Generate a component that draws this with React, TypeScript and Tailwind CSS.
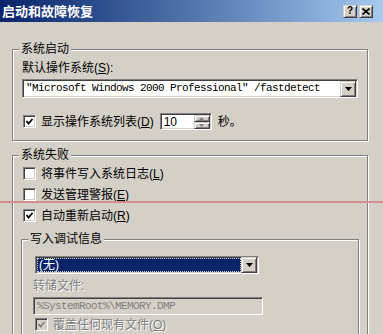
import type { ReactNode } from "react";

const font = "font-['Liberation_Sans','Noto_Sans_CJK_SC',sans-serif]";
const mono = "font-['Liberation_Mono','DejaVu_Sans_Mono',monospace]";
const sunken =
  "box-border border border-t-[#808080] border-l-[#808080] border-b-white border-r-white shadow-[inset_1px_1px_0_#404040,inset_-1px_-1px_0_#d4d0c8]";
const raised =
  "box-border border border-t-[#d4d0c8] border-l-[#d4d0c8] border-b-[#404040] border-r-[#404040] bg-[#d4d0c8] shadow-[inset_1px_1px_0_#fff,inset_-1px_-1px_0_#808080]";

function Check({ checked, disabled }: { checked?: boolean; disabled?: boolean }) {
  return (
    <span
      className={`flex h-[13px] w-[13px] shrink-0 items-center justify-center ${sunken} ${disabled ? "bg-[#d4d0c8]" : "bg-white"}`}
    >
      {checked ? (
        <svg width="9" height="9" viewBox="0 0 9 9">
          <polyline
            points="1.5,4 3.5,6.5 7.5,2"
            fill="none"
            stroke={disabled ? "#808080" : "#000"}
            strokeWidth="1.8"
          />
        </svg>
      ) : null}
    </span>
  );
}

function DropBtn() {
  return (
    <span className={`flex h-[16px] w-[16px] shrink-0 items-center justify-center ${raised}`}>
      <svg width="7" height="4" viewBox="0 0 7 4">
        <polygon points="0,0 7,0 3.5,4" fill="#000" />
      </svg>
    </span>
  );
}

function Group({ title, className, children }: { title: string; className?: string; children: ReactNode }) {
  return (
    <div
      className={`relative box-border border border-[#808080] shadow-[inset_1px_1px_0_#fff,1px_1px_0_#fff] ${className ?? ""}`}
    >
      <span className="absolute -top-[8px] left-[6px] bg-[#d4d0c8] px-[2px] text-[12px] leading-[14px] text-black">
        {title}
      </span>
      {children}
    </div>
  );
}

function Row({ checked, disabled, children }: { checked?: boolean; disabled?: boolean; children: ReactNode }) {
  return (
    <div className="flex h-[21px] items-center gap-[5px]">
      <Check checked={checked} disabled={disabled} />
      <span
        className={`text-[12px] leading-[14px] ${disabled ? "text-[#808080] [text-shadow:1px_1px_0_#fff]" : "text-black"}`}
      >
        {children}
      </span>
    </div>
  );
}

export default function App() {
  return (
    <div className={`relative h-[334px] w-[383px] overflow-hidden bg-[#d4d0c8] ${font}`}>
      {/* title bar */}
      <div className="flex h-[22px] items-center bg-gradient-to-r from-[#0a246a] to-[#a6caf0] pl-[2px] pr-[10px]">
        <span className="flex-1 text-[13px] font-bold leading-none text-white">启动和故障恢复</span>
        <div className="flex gap-[2px]">
          <span className={`flex h-[13px] w-[14px] items-center justify-center text-[10px] font-bold leading-none text-black ${raised}`}>
            ?
          </span>
          <span className={`flex h-[13px] w-[14px] items-center justify-center ${raised}`}>
            <svg width="8" height="7" viewBox="0 0 8 7">
              <path d="M0.5 0.5 L7.5 6.5 M7.5 0.5 L0.5 6.5" stroke="#000" strokeWidth="1.6" />
            </svg>
          </span>
        </div>
      </div>

      <div className="pl-[12px]">
        <Group title="系统启动" className="mt-[27px] h-[92px] w-[356px]">
          <div className="pl-[9px] pt-[11px]">
            <div className="text-[12px] leading-[14px] text-black">
              默认操作系统(<u>S</u>):
            </div>
            <div className={`mt-[4px] flex h-[19px] w-[336px] items-center bg-white pl-[3px] pr-[1px] ${sunken}`}>
              <span className={`flex-1 whitespace-pre text-[11px] tracking-[-0.6px] leading-none text-black ${mono}`}>
                "Microsoft Windows 2000 Professional" /fastdetect
              </span>
              <DropBtn />
            </div>
            <div className="mt-[15px] flex h-[17px] items-center">
              <div className="ml-[1px] flex items-center gap-[5px]">
                <Check checked />
                <span className="text-[12px] leading-[14px] text-black">
                  显示操作系统列表(<u>D</u>)
                </span>
              </div>
              <div className={`ml-[6px] flex h-[17px] w-[52px] items-center bg-white pl-[3px] pr-[1px] ${sunken}`}>
                <span className="flex-1 text-[12px] leading-none text-black">10</span>
                <div className="flex flex-col">
                  <span className={`flex h-[7px] w-[16px] items-center justify-center ${raised}`}>
                    <svg width="5" height="3" viewBox="0 0 5 3">
                      <polygon points="0,3 5,3 2.5,0" fill="#808080" />
                    </svg>
                  </span>
                  <span className={`flex h-[7px] w-[16px] items-center justify-center ${raised}`}>
                    <svg width="5" height="3" viewBox="0 0 5 3">
                      <polygon points="0,0 5,0 2.5,3" fill="#808080" />
                    </svg>
                  </span>
                </div>
              </div>
              <span className="ml-[6px] text-[12px] leading-[14px] text-black">秒。</span>
            </div>
          </div>
        </Group>

        <Group title="系统失败" className="mt-[14px] h-[200px] w-[356px]">
          <div className="pt-[7px]">
            <div className="pl-[10px]">
              <Row>
                将事件写入系统日志(<u>L</u>)
              </Row>
              <Row>
                发送管理警报(<u>E</u>)
              </Row>
              <Row checked>
                自动重新启动(<u>R</u>)
              </Row>
            </div>
            <Group title="写入调试信息" className="ml-[8px] mt-[13px] h-[120px] w-[338px]">
              <div className="pl-[11px] pt-[16px]">
                <div className={`ml-[2px] flex h-[18px] w-[224px] items-center bg-white p-[1px] ${sunken}`}>
                  <div className="flex h-full flex-1 items-center bg-[#0a246a] pl-[2px] outline-1 outline-dotted outline-offset-[-1px] outline-[#d4d0c8]">
                    <span className="text-[12px] leading-none text-white">(无)</span>
                  </div>
                  <DropBtn />
                </div>
                <div className="mt-[5px] text-[12px] leading-[14px] text-[#808080] [text-shadow:1px_1px_0_#fff]">
                  转储文件:
                </div>
                <div className={`mt-[4px] flex h-[18px] w-[230px] items-center bg-[#d4d0c8] pl-[3px] ${sunken}`}>
                  <span className={`text-[11px] tracking-[-0.6px] leading-none text-[#808080] ${mono}`}>
                    %SystemRoot%\MEMORY.DMP
                  </span>
                </div>
                <div className="ml-[2px] -mt-[1px]">
                  <Row checked disabled>
                    覆盖任何现有文件(<u>O</u>)
                  </Row>
                </div>
              </div>
            </Group>
          </div>
        </Group>
      </div>

      {/* annotation line across the screenshot */}
      <div className="absolute left-0 top-[201px] h-[2px] w-full bg-[#d98a8a]" />
    </div>
  );
}
